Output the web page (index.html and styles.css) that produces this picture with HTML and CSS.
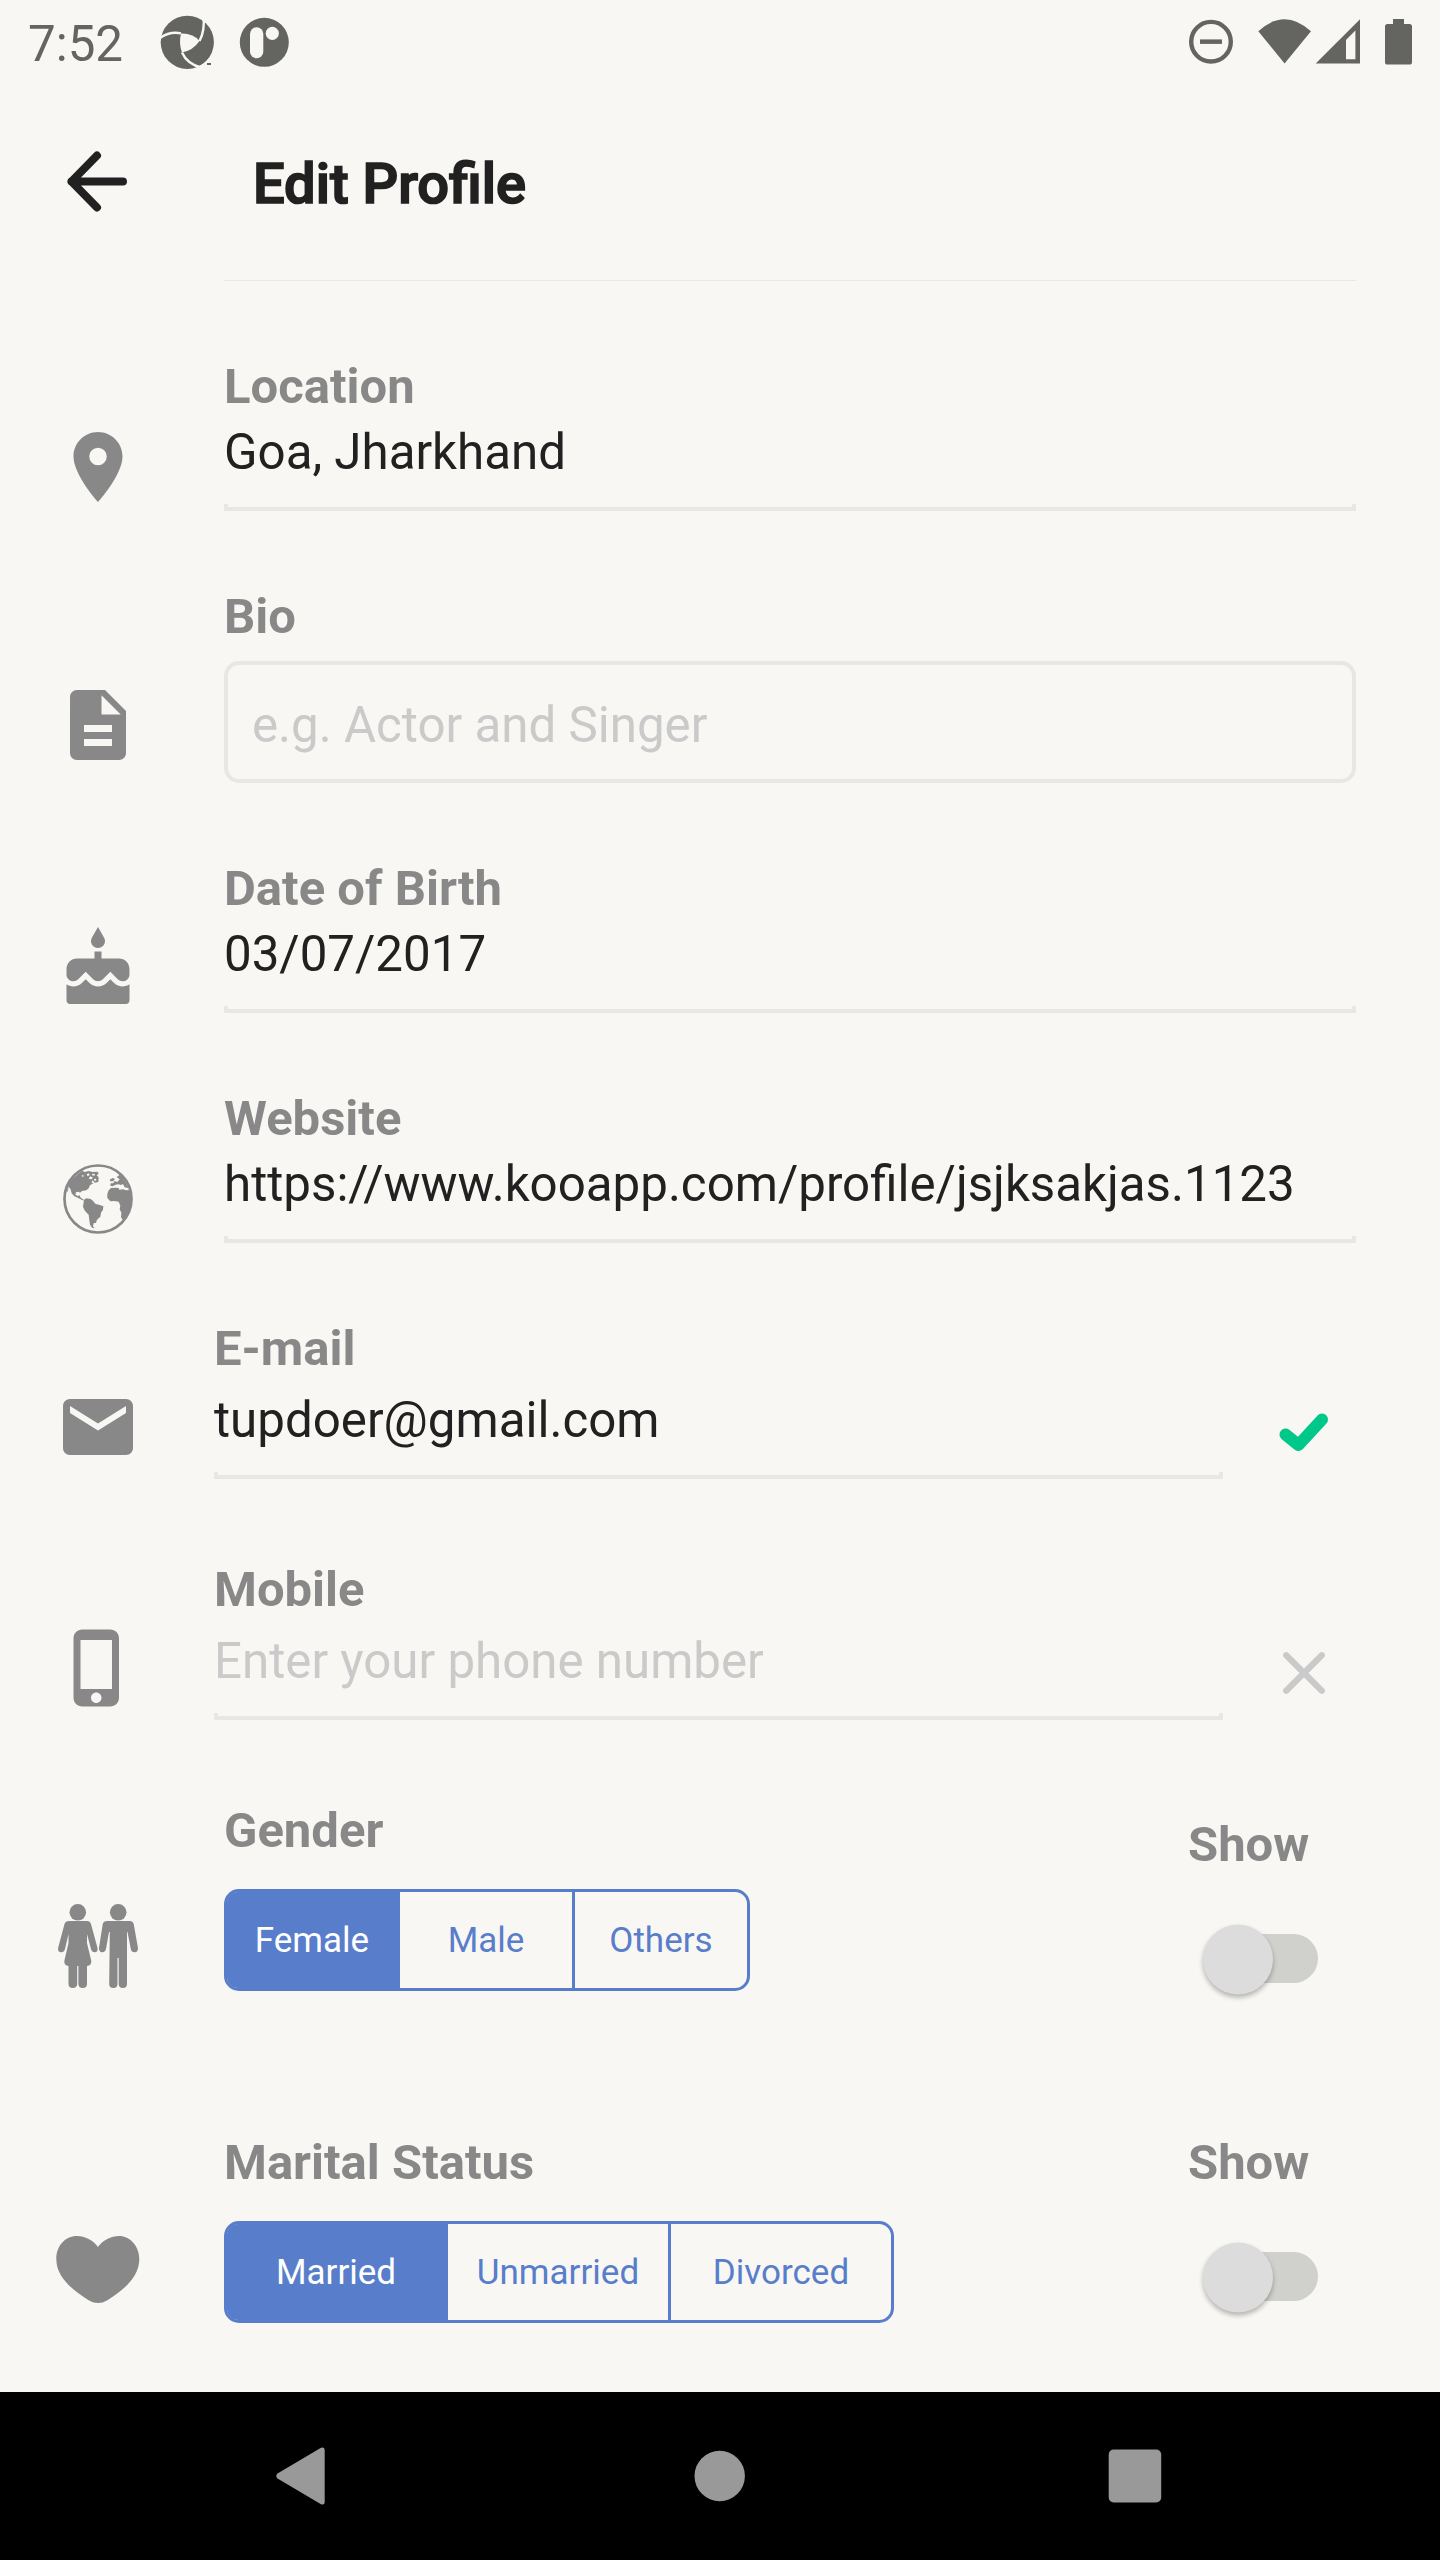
FILE: index.html
```html
<!DOCTYPE html>
<html lang="en">
<head>
<meta charset="utf-8">
<title>Edit Profile</title>
<link rel="stylesheet" href="styles.css">
</head>
<body>
<div class="screen">
  <div class="status">
    <span class="clock">7:52</span>
    <svg class="status-left" width="140" height="84" viewBox="150 0 140 84">
      <circle cx="187.3" cy="42.3" r="26.6"/>
      <g class="cut">
        <path d="M181 33.500Q193 33 199.500 41Q193 50.500 182 52.500Q178.500 43 181 33.500Z"/>
        <path d="M160 38Q170 31 181 33.300" class="cut-line"/>
        <path d="M203.500 16Q205 31 199.500 41" class="cut-line"/>
        <path d="M182 52.500Q187 64 202 68" class="cut-line"/>
        <path d="M200 65.500L210 61L214 70L194 70Z"/>
      </g>
      <path d="M207 63h4v2h-4z"/>
      <circle cx="264.300" cy="42.300" r="24.500"/>
      <g class="cut"><rect x="250" y="27.300" width="13.300" height="31" rx="6.600"/><circle cx="272.300" cy="33.300" r="6.600"/></g>
    </svg>
    <svg class="status-right" width="240" height="84" viewBox="1180 0 240 84">
      <circle cx="1211" cy="41.700" r="19.800" class="dnd"/>
      <path d="M1200 39.400h22v4.500h-22z"/>
      <path d="M1258.300 31.300Q1284.500 7 1311 31.300L1284.600 63.500Z"/>
      <path fill-rule="evenodd" d="M1360 19.300V63.600H1315.700ZM1355.400 30.500L1346 39.900V59.200H1355.400Z"/>
      <path d="M1393 19h11v5h5.500q2.500 0 2.500 2.500v35.500q0 2.600-2.500 2.600h-22q-2.500 0-2.500-2.600v-35.500q0-2.500 2.500-2.500h5.500z"/>
    </svg>
  </div>

  <header class="header">
    <svg class="back" width="84" height="84" viewBox="0 0 84 84"><path d="M41 16.500L15.500 42.500L41 68.500M15.500 42.500H67"/></svg>
    <h1 class="title">Edit Profile</h1>
  </header>

  <main class="form">
    <section class="row">
      <svg class="icon" viewBox="0 0 24 24"><path d="M12 2C8.130 2 5 5.130 5 9c0 5.250 7 13 7 13s7-7.750 7-13c0-3.870-3.130-7-7-7zm0 9.500a2.500 2.500 0 0 1 0-5 2.500 2.500 0 0 1 0 5z"/></svg>
      <div class="field"><div class="label">Location</div><div class="value">Goa, Jharkhand</div></div>
    </section>

    <section class="row row-bio">
      <svg class="icon" viewBox="0 0 24 24"><path d="M14 2H6c-1.100 0-1.990.9-1.990 2L4 20c0 1.100.89 2 1.990 2H18c1.100 0 2-.9 2-2V8l-6-6zm2 16H8v-2h8v2zm0-4H8v-2h8v2zm-3-5V3.500L18.500 9H13z"/></svg>
      <div class="field"><div class="label">Bio</div><div class="box">e.g. Actor and Singer</div></div>
    </section>

    <section class="row">
      <svg class="icon" viewBox="0 0 24 24"><path d="M12 6c1.110 0 2-.9 2-2 0-.38-.1-.73-.29-1.030L12 0l-1.710 2.970c-.19.3-.29.65-.29 1.030 0 1.100.9 2 2 2zm4.600 9.990l-1.070-1.070-1.080 1.070c-1.300 1.300-3.580 1.310-4.890 0l-1.070-1.070-1.090 1.070C6.750 16.640 5.880 17 4.960 17c-.73 0-1.400-.23-1.960-.61V21c0 .55.45 1 1 1h16c.55 0 1-.45 1-1v-4.610c-.56.38-1.230.61-1.960.61-.92 0-1.790-.36-2.440-1.010zM18 9h-5V7h-2v2H6c-1.660 0-3 1.340-3 3v1.540c0 1.080.88 1.960 1.960 1.960.52 0 1.020-.2 1.380-.57l2.140-2.130 2.130 2.130c.74.74 2.030.74 2.770 0l2.140-2.130 2.130 2.130c.37.37.86.57 1.380.57 1.080 0 1.960-.88 1.960-1.960V12C21 10.340 19.660 9 18 9z"/></svg>
      <div class="field"><div class="label">Date of Birth</div><div class="value">03/07/2017</div></div>
    </section>

    <section class="row">
      <svg class="icon" viewBox="6 3 252 252">
        <circle cx="132" cy="129" r="100.500" class="globe-ring"/>
        <path d="M84 44L92 48L104 45L116 48L131 47L134 53L128 58L134 64L133 78L122 80L116 73L112 79L118 82L108 88L104 97L97 103L84 105L78 110L74 107L66 109L64 116L72 120L77 118L80 125L88 130L89 134L80 130L71 125L60 120L53 112L49 98L44 92L42 104L38 110Q42 82 58 66Z"/>
        <path d="M90 131L97 127L110 129L118 136L125 144L135 146L148 151L147 161L141 170L139 182L129 191L126 200L119 202L117 211L122 217L114 215L108 206L106 193L104 176L93 165L87 153Z"/>
        <path d="M164 103L171 96L186 95L194 96L196 101L207 100L216 103L226 102Q234 122 231 146Q224 174 207 192L201 184L202 170L197 160L199 149L194 137L181 135L169 136L160 126L160 114Z"/>
        <path d="M188 63L198 56Q215 74 224 97L212 94L207 84L201 87L193 85L185 86L176 91L169 89L170 82L178 82L181 75L190 78L197 70Z"/>
        <path d="M167 71L176 66L183 69L177 76L169 76Z"/>
        <path d="M98 55l6-3 3 5-6 4zM109 61l8 4-5 5-8-2zM115 53l8 1-2 5-7-1zM83 57l7 2-4 5zM197 90l6 0 0 4-7-1zM120 69l6-1 1 6-6 0z" class="cut"/>
      </svg>
      <div class="field"><div class="label">Website</div><div class="value">https://www.kooapp.com/profile/jsjksakjas.1123</div></div>
    </section>

    <section class="row row-contact">
      <svg class="icon" viewBox="0 0 24 24"><path d="M20 4H4c-1.100 0-1.990.9-1.990 2L2 18c0 1.100.9 2 2 2h16c1.100 0 2-.9 2-2V6c0-1.100-.9-2-2-2zm0 4l-8 5-8-5V6l8 5 8-5v2z"/></svg>
      <div class="field"><div class="label">E-mail</div><div class="value">tupdoer@gmail.com</div></div>
      <svg class="mark check" width="60" height="60" viewBox="0 0 60 60"><path d="M11.500 31.500L24.500 42L48 16.500"/></svg>
    </section>

    <section class="row row-contact row-mobile">
      <svg class="icon" viewBox="0 0 24 24"><path d="M15.500 1h-8C6.120 1 5 2.120 5 3.500v17C5 21.880 6.120 23 7.500 23h8c1.380 0 2.500-1.120 2.500-2.500v-17C18 2.120 16.880 1 15.500 1zm-4 21c-.83 0-1.500-.67-1.500-1.500s.67-1.500 1.500-1.500 1.500.67 1.500 1.500-.67 1.500-1.500 1.500zm4.500-4H7V4h9v14z"/></svg>
      <div class="field"><div class="label">Mobile</div><div class="value hint">Enter your phone number</div></div>
      <svg class="mark cross" width="60" height="60" viewBox="0 0 60 60"><path d="M12.200 11.200L47.800 46.800M47.800 11.200L12.200 46.800"/></svg>
    </section>

    <section class="row row-choice">
      <svg class="icon" viewBox="56 1904 84 84">
        <circle cx="77.800" cy="1912.300" r="8.300"/><circle cx="118.200" cy="1912.300" r="8.300"/>
        <path d="M69 1921H87Q90 1921 91 1924L97.500 1948Q98 1952 95 1952.300Q92 1952.500 91 1949L87 1934V1943L91.300 1961Q91.500 1965.500 87 1966V1984.500Q86.500 1988 82.700 1988Q79 1988 78.400 1984.500V1966H77.200V1984.500Q76.500 1988 72.800 1988Q69 1988 68.500 1984.500V1966Q64 1965.500 64.300 1961L68.500 1943V1934L65 1949Q64 1952.500 61 1952.300Q57.500 1952 58.100 1948L64.500 1924Q65.500 1921 69 1921Z"/>
        <path d="M107 1921H129.500Q133 1921 133.700 1924L138 1948Q138 1952 135 1952.300Q131.500 1952.500 130.800 1949L127.500 1932H127V1984.500Q126.500 1988 122.800 1988Q119.200 1988 118.700 1984.500V1958H117.500V1984.500Q117 1988 113.400 1988Q109.500 1988 109.200 1984.500L109.800 1932H109L106 1949Q105 1952.500 102 1952.300Q99 1952 99 1948L102.700 1924Q103.500 1921 107 1921Z"/>
      </svg>
      <div class="field">
        <div class="label">Gender</div>
        <div class="segments gender"><div class="seg on">Female</div><div class="seg">Male</div><div class="seg">Others</div></div>
      </div>
      <div class="show show-low"><div class="label">Show</div><div class="switch"><div class="thumb"></div></div></div>
    </section>

    <section class="row row-choice row-marital">
      <svg class="icon" viewBox="56 2228 84 84"><path d="M98 2247C103 2240 111 2236 119 2236C130 2236 139.300 2246 139.300 2259C139.300 2278 122 2291 107 2300.500Q98 2305.500 89 2300.500C74 2291 56.300 2278 56.300 2259C56.300 2246 65 2236 77 2236C85 2236 93 2240 98 2247Z"/></svg>
      <div class="field">
        <div class="label">Marital Status</div>
        <div class="segments marital"><div class="seg on">Married</div><div class="seg">Unmarried</div><div class="seg">Divorced</div></div>
      </div>
      <div class="show"><div class="label">Show</div><div class="switch"><div class="thumb"></div></div></div>
    </section>
  </main>

  <nav class="nav">
    <svg width="84" height="84" viewBox="0 0 84 84"><path d="M61 13.800Q64.700 12.500 64.700 16V68Q64.700 71.500 61 70.200L17.500 44.500Q15 42 17.500 39.500Z"/></svg>
    <svg width="84" height="84" viewBox="0 0 84 84"><circle cx="42.700" cy="42" r="25.200"/></svg>
    <svg width="84" height="84" viewBox="0 0 84 84"><rect x="15.700" y="15.500" width="52.500" height="53" rx="5"/></svg>
  </nav>
</div>
</body>
</html>
```

FILE: styles.css
```css
* { box-sizing: border-box; }
body { margin: 0; background: #f8f7f3; font-family: Roboto, "Liberation Sans", sans-serif; color: #212121; }
svg { display: block; flex: none; }
.screen { width: 1440px; height: 2560px; display: flex; flex-direction: column; background: #f8f7f3; overflow: hidden; }

.status { height: 84px; display: flex; align-items: flex-start; padding: 0 20px 0 28px; fill: #646461; }
.clock { width: 122px; margin-top: 15px; font-size: 49.3px; line-height: 58px; color: #646461; white-space: nowrap; }
.status-right { margin-left: auto; }
.cut { fill: #f8f7f3; }
.cut-line { fill: none; stroke: #f8f7f3; stroke-width: 2.4; }
.dnd { fill: none; stroke: #646461; stroke-width: 4.4; }

.header { height: 197px; display: flex; padding-left: 56px; position: relative; }
.header::after { content: ""; position: absolute; left: 224px; right: 84px; bottom: 0; height: 1px; background: #e7e8e3; }
.back { margin-top: 55px; fill: none; stroke: #212121; stroke-width: 8; stroke-linecap: round; stroke-linejoin: round; }
.title { margin: 66px 0 0 113px; font-size: 56px; line-height: 68px; font-weight: 500; -webkit-text-stroke: 1.7px #212121; }

.form { flex: 1; padding: 77px 84px 0 56px; display: flex; flex-direction: column; gap: 77px; }
.row { display: flex; align-items: flex-start; height: 153px; }
.icon { width: 84px; height: 84px; margin: 67px 84px 0 0; fill: #888; }
.globe-ring { fill: none; stroke: #888; stroke-width: 8; }
.field { flex: 1; }
.label { font-size: 49px; line-height: 57px; font-weight: 700; color: #888; white-space: nowrap; }
.value {
  height: 87px; margin-top: 9px; font-size: 49.25px; line-height: 57px; white-space: nowrap;
  border-bottom: 4px solid #e7e8e3;
  background: linear-gradient(#e7e8e3, #e7e8e3) left bottom / 4px 3px no-repeat, linear-gradient(#e7e8e3, #e7e8e3) right bottom / 4px 3px no-repeat;
}
.hint { color: #cacaca; }

.row-bio { height: 195px; }
.row-bio .icon { margin-top: 95px; }
.box { height: 122px; margin-top: 16px; padding: 31px 24px; border: 4px solid #e7e8e3; border-radius: 15px; font-size: 49.25px; line-height: 58px; color: #cacaca; }

.row-contact { height: 159px; }
.row-contact .icon { margin: 65px 74px 0 0; }
.row-contact .field { flex: none; width: 1009px; }
.row-contact .value { margin-top: 15px; }
.row-mobile { margin-top: 5px; }
.row-mobile .icon { margin-top: 64.5px; }
.mark { margin: 83px 0 0 51px; fill: none; stroke-linecap: round; stroke-linejoin: round; }
.check { stroke: #00c78a; stroke-width: 12; }
.cross { stroke: #cacaca; stroke-width: 6.2; }

.row-choice { height: 189px; margin-top: 5px; }
.row-choice .icon { margin-top: 102px; }
.row-marital { margin-top: 66px; }
.row-marital .icon { margin-top: 94px; }
.segments { height: 102px; margin-top: 30px; display: grid; border: 3.5px solid #587ecb; border-radius: 15px; }
.gender { width: 526px; grid-template-columns: 173px 175px 1fr; }
.marital { width: 670px; grid-template-columns: 221px 223px 1fr; }
.seg { display: flex; align-items: center; justify-content: center; font-size: 35px; line-height: 41px; color: #587ecb; border-right: 3.5px solid #587ecb; }
.seg:last-child { border-right: 0; }
.on { background: #587ecb; color: #fff; border-radius: 11px 0 0 11px; }
.show { width: 168px; }
.show-low { margin-top: 14px; }
.switch { width: 108px; height: 49px; margin: 61px 0 0 22px; border-radius: 25px; background: #d0d1cc; }
.thumb { width: 70px; height: 70px; margin-left: -7px; transform: translateY(-9.5px); border-radius: 50%; background: #dcdcdc; box-shadow: 0 3px 5px rgba(0, 0, 0, .28); }

.nav { height: 168px; background: #000; fill: #999; display: flex; align-items: center; justify-content: space-between; padding: 0 263px 0 260px; }
```
